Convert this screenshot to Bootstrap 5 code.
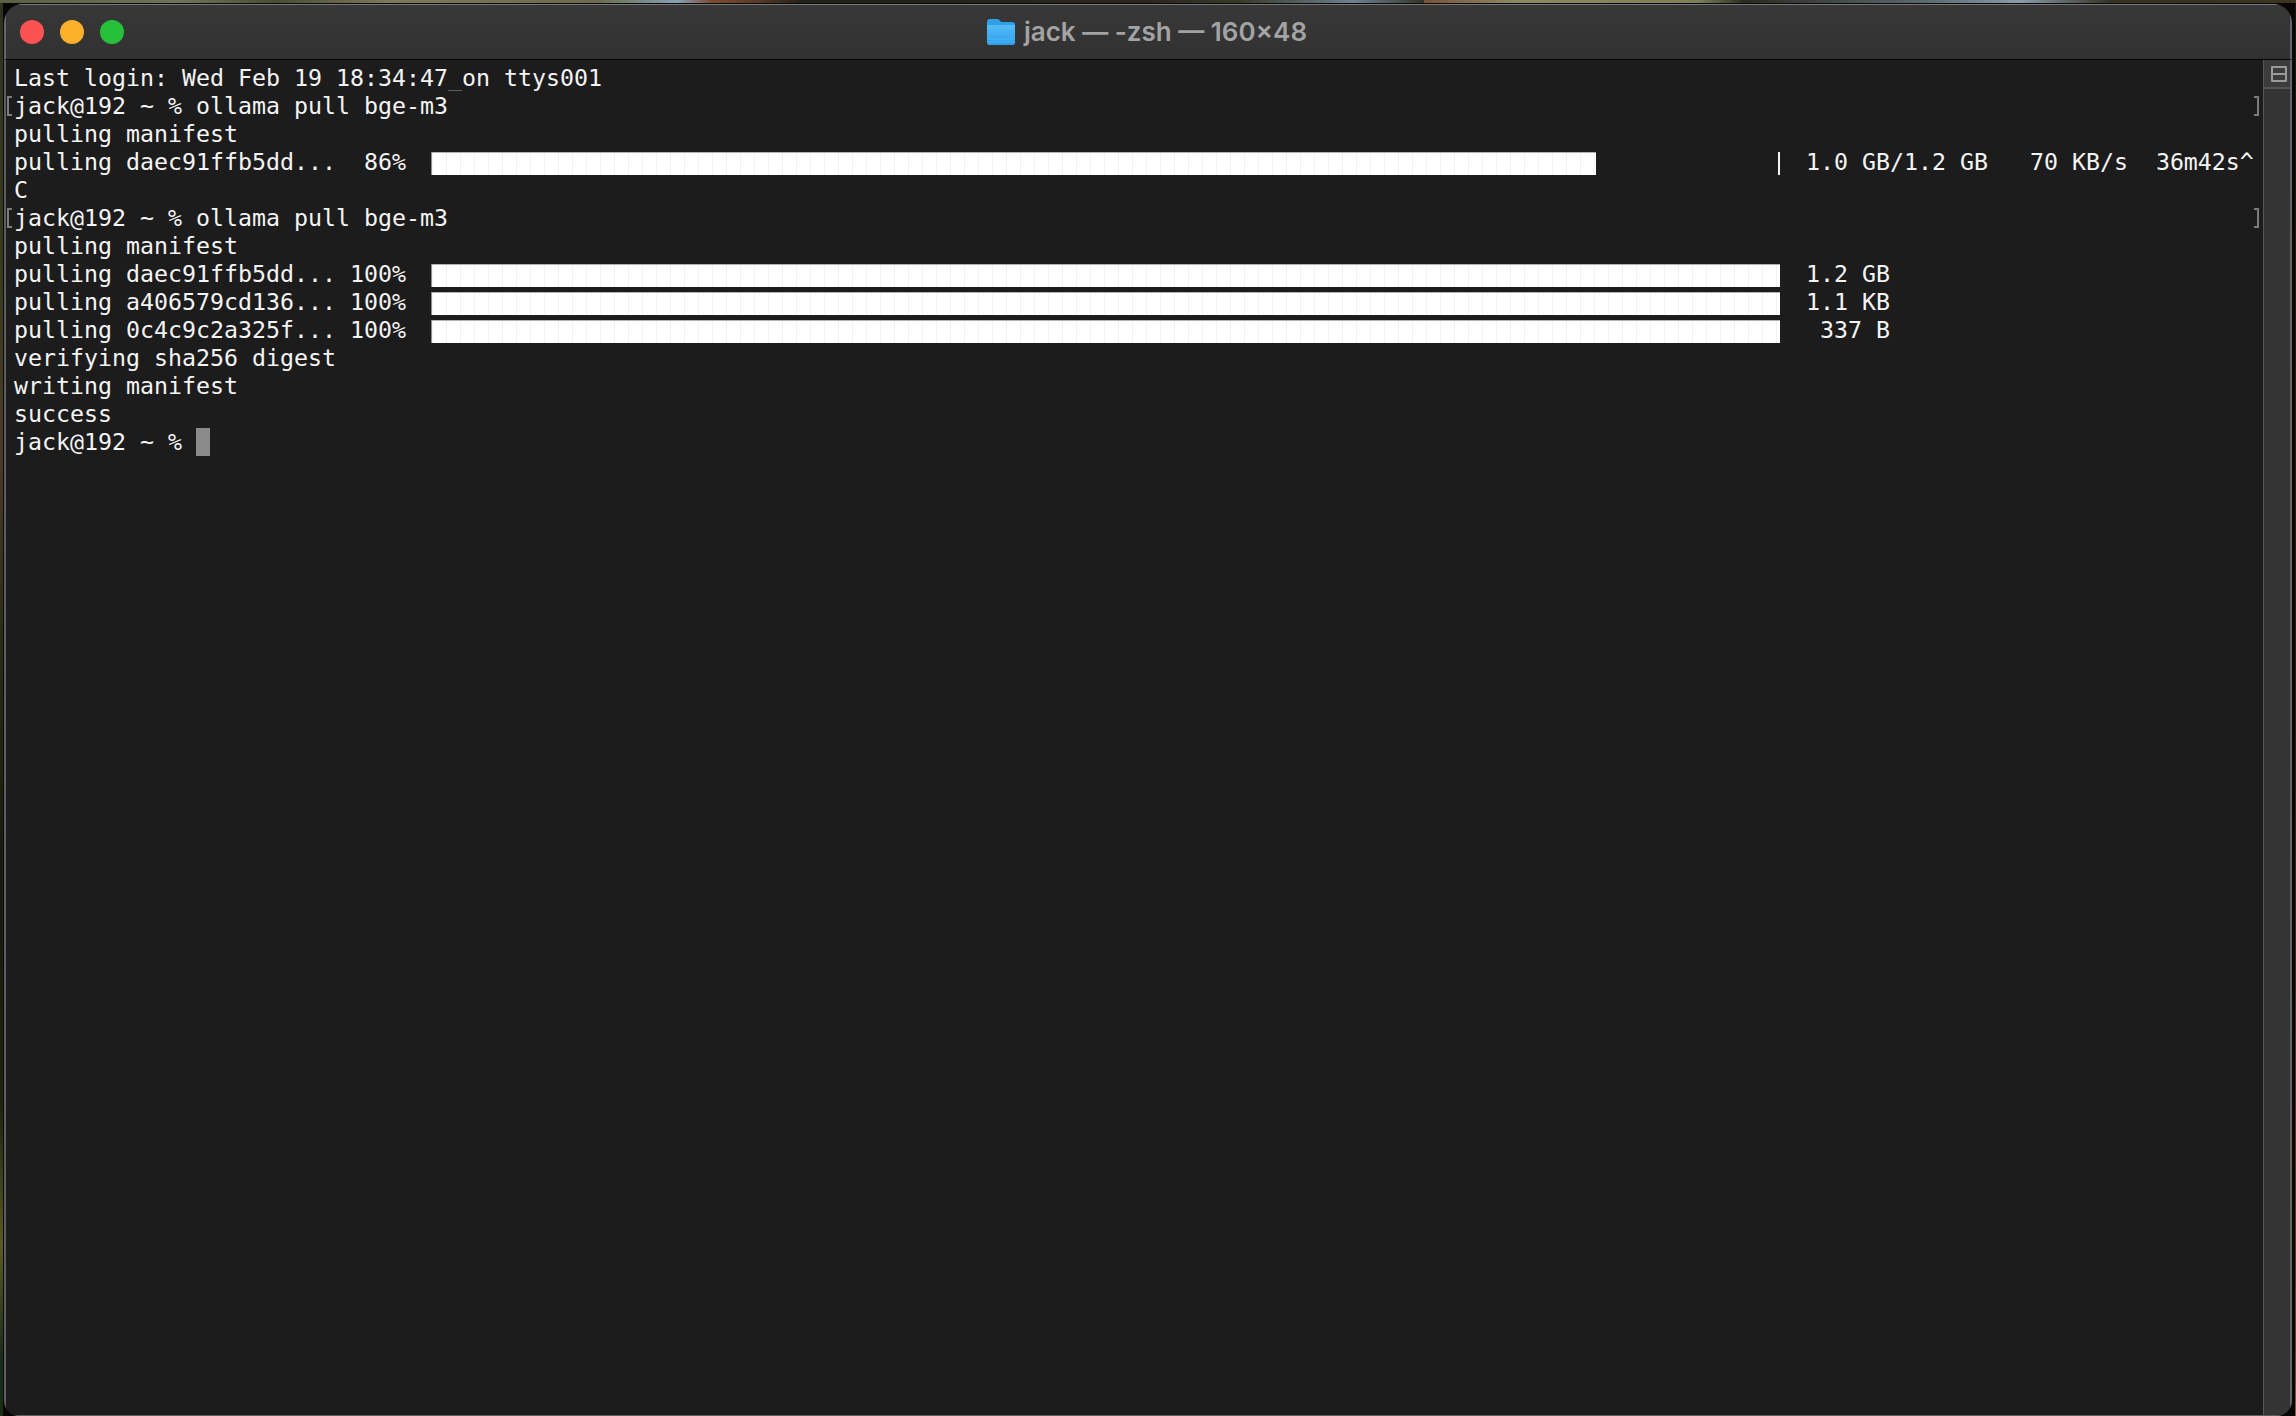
<!doctype html>
<html lang="en">
<head>
<meta charset="utf-8">
<title>jack — -zsh — 160×48</title>
<link href="https://cdn.jsdelivr.net/npm/bootstrap@5.3.0/dist/css/bootstrap.min.css" rel="stylesheet">
<style>
html,body{height:100%;margin:0;overflow:hidden}
body{background:
 linear-gradient(90deg,#5d5f45 0,#6f7358 8%,#4a4c36 12%,#7d7a5a 17%,#6b6a4c 26%,#86a0b4 29.5%,#7a4c30 31%,#5a3a28 33%,#22201a 35%,#2b2620 50%,#3a3a2a 54%,#6f8090 59%,#34342a 62%,#7a5238 61.5%,#8a8a60 66%,#7d7f55 74%,#2b2a22 76%,#5d6a70 84%,#8b9ba8 88%,#333024 92%,#3d3420 100%) top/100% 3px no-repeat,
 linear-gradient(180deg,#2f3320 0,#3a3a22 22%,#4a3a2c 32%,#2a2c18 45%,#17190f 62%,#1c2410 78%,#5a5a24 88%,#1a2a1c 96%,#1c2c18 100%) left/3px 100% no-repeat,
 linear-gradient(180deg,#1a1510 0,#2a1c12 50%,#6a3c1e 95%,#8a5a34 100%) right/1px 100% no-repeat,
 #080706}
.win-frame{height:1413px;margin:3px 3px 0 3px;border:1px solid #0a0a0a;border-bottom:0;border-radius:20px 20px 16px 16px;overflow:hidden;background:#1c1c1c}
.title-strip{height:56px;flex:none;background:linear-gradient(180deg,#383838,#313131);border-top:1px solid #7a7a7a;border-left:2px solid #666;border-right:2px solid #666;border-bottom:1px solid #050505;position:relative}
.light{width:24px;height:24px;border-radius:50%;flex:none}
.lights{gap:16px;padding-left:14px;position:absolute;left:0;top:0;height:100%}
.l-red{background:#fc5350}.l-yellow{background:#fdb12a}.l-green{background:#27c03b}
.title-label{font:600 26px/1 Inter,"Liberation Sans",sans-serif;color:#a3a3a3;gap:9px;white-space:pre;padding-bottom:1px;margin-left:-2px}
.term-body{min-height:0;border-left:2px solid #5e5e5e;border-bottom:1px solid #5e5e5e}
.term-text{background:#1c1c1c;padding:4px 0 0 8px;font:23.25px/28px "DejaVu Sans Mono",monospace;color:#f4f4f4}
.trow{height:28px;position:relative;white-space:pre}
.sel-gap{box-shadow:inset 0 -1px #5f5f5f;color:#5f5f5f}
.mark-l,.mark-r{position:absolute;top:4px;width:5px;height:20px;border:2px solid #7c7c7c}
.mark-l{left:-7px;border-right:0}
.mark-r{left:2240px;border-left:0}
.cursor-block{display:inline-block;width:14px;height:28px;background:#8a8a8a;vertical-align:top}
.term-bar{--bs-progress-height:23px;--bs-progress-bg:transparent;--bs-progress-border-radius:0;width:1349px;margin:4px 26px 0 11px;flex:none;border-radius:0}
.term-bar .progress-bar{transition:none;background-color:#fff;background-image:repeating-linear-gradient(90deg,#f2f2f2 0,#f2f2f2 1px,#fff 1px,#fff 14px);background-position:1px 0;box-shadow:inset 1px 0 #8f8f8f,inset 0 1px #b4b4b4}
.term-bar.open-end{border-right:2px solid #f4f4f4}
.scroll-rail{width:29px;flex:none;background:#343434;border-left:1px solid #575757;border-right:2px solid #666}
.split-box{height:29px;border-bottom:2px solid #555;background:#3c3c3c;padding-left:3px}
.split-icon{width:16px;height:16px;border:2px solid #9a9a9a;border-radius:1px;position:relative;background:linear-gradient(#9a9a9a,#9a9a9a) center/100% 2px no-repeat}
</style>
</head>
<body>
<div class="win-frame d-flex flex-column">
  <div class="title-strip d-flex align-items-center justify-content-center">
    <div class="lights d-flex align-items-center">
      <span class="light l-red"></span><span class="light l-yellow"></span><span class="light l-green"></span>
    </div>
    <div class="title-label d-flex align-items-center">
      <svg width="28" height="26" viewBox="0 0 28 26" aria-hidden="true"><defs><linearGradient id="fg" x1="0" y1="0" x2="0" y2="1"><stop offset="0" stop-color="#55bdf8"/><stop offset="1" stop-color="#2a9fe8"/></linearGradient></defs><path d="M0 3q0-3 3-3h7q2 0 3 1.500l1 1.500h11q3 0 3 2v18q0 3-3 3H3q-3 0-3-3z" fill="#2f9fe6"/><path d="M0 6h28v17q0 3-3 3H3q-3 0-3-3z" fill="url(#fg)"/><path d="M0 20h28M0 23h28" stroke="#62c3f8" stroke-opacity=".55"/></svg>
      <span>jack — -zsh — 160×48</span>
    </div>
  </div>
  <div class="term-body flex-grow-1 d-flex">
    <div class="term-text flex-grow-1">
      <div class="trow">Last login: Wed Feb 19 18:34:47<span class="sel-gap"> </span>on ttys001</div>
      <div class="trow"><span class="mark-l"></span>jack@192 ~ % ollama pull bge-m3<span class="mark-r"></span></div>
      <div class="trow">pulling manifest</div>
      <div class="trow d-flex"><span>pulling daec91ffb5dd...  86% </span><div class="progress term-bar open-end"><div class="progress-bar" style="width:86.5%"></div></div><span>1.0 GB/1.2 GB   70 KB/s  36m42s^</span></div>
      <div class="trow">C</div>
      <div class="trow"><span class="mark-l"></span>jack@192 ~ % ollama pull bge-m3<span class="mark-r"></span></div>
      <div class="trow">pulling manifest</div>
      <div class="trow d-flex"><span>pulling daec91ffb5dd... 100% </span><div class="progress term-bar"><div class="progress-bar" style="width:100%"></div></div><span>1.2 GB</span></div>
      <div class="trow d-flex"><span>pulling a406579cd136... 100% </span><div class="progress term-bar"><div class="progress-bar" style="width:100%"></div></div><span>1.1 KB</span></div>
      <div class="trow d-flex"><span>pulling 0c4c9c2a325f... 100% </span><div class="progress term-bar"><div class="progress-bar" style="width:100%"></div></div><span> 337 B</span></div>
      <div class="trow">verifying sha256 digest</div>
      <div class="trow">writing manifest</div>
      <div class="trow">success</div>
      <div class="trow">jack@192 ~ % <span class="cursor-block"></span></div>
    </div>
    <div class="scroll-rail">
      <div class="split-box d-flex align-items-center justify-content-center"><span class="split-icon"></span></div>
    </div>
  </div>
</div>
</body>
</html>
